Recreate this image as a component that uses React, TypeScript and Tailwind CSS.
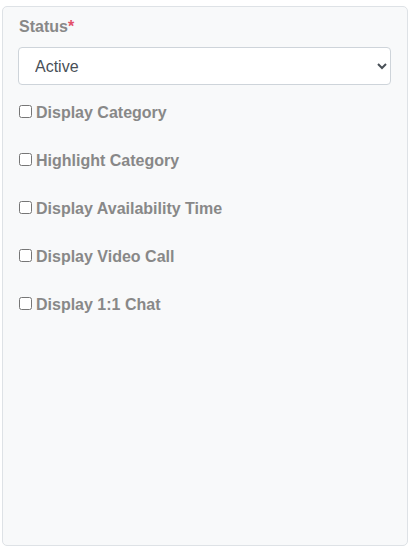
import { useState } from 'react'

const options = [
  'Display Category',
  'Highlight Category',
  'Display Availability Time',
  'Display Video Call',
  'Display 1:1 Chat',
]

export default function App() {
  const [status, setStatus] = useState('Active')
  const [checked, setChecked] = useState<Record<string, boolean>>({})

  return (
    <div className="w-[415px] h-[550px] bg-white pl-[2px] pt-[6px] font-['Liberation_Sans',Arial,sans-serif]">
      <div className="w-[406px] h-[540px] bg-[#f8f9fa] border border-[#dee2e6] rounded-[5px] px-[15px] pt-[10px]">
        <label className="block pl-[1px] text-[16px] leading-[20px] font-bold text-[#888888]">
          Status<span className="text-[#e3516a]">*</span>
        </label>
        <select
          value={status}
          onChange={e => setStatus(e.target.value)}
          className="mt-[10px] block w-[373px] h-[38px] bg-white border border-[#ced4da] rounded-[4px] pl-[12px] pr-2 text-[16px] text-[#495057] font-['Liberation_Sans',Arial,sans-serif]"
        >
          <option>Active</option>
          <option>Inactive</option>
        </select>
        <div className="mt-[16px] flex flex-col gap-[24px]">
          {options.map(opt => (
            <label key={opt} className="h-[24px] flex items-center gap-[4px] text-[16px] font-bold text-[#888888]">
              <input
                type="checkbox"
                checked={!!checked[opt]}
                onChange={() => setChecked({ ...checked, [opt]: !checked[opt] })}
                className="w-[13px] h-[13px] m-0 ml-[1px] mb-[3px]"
              />
              {opt}
            </label>
          ))}
        </div>
      </div>
    </div>
  )
}
